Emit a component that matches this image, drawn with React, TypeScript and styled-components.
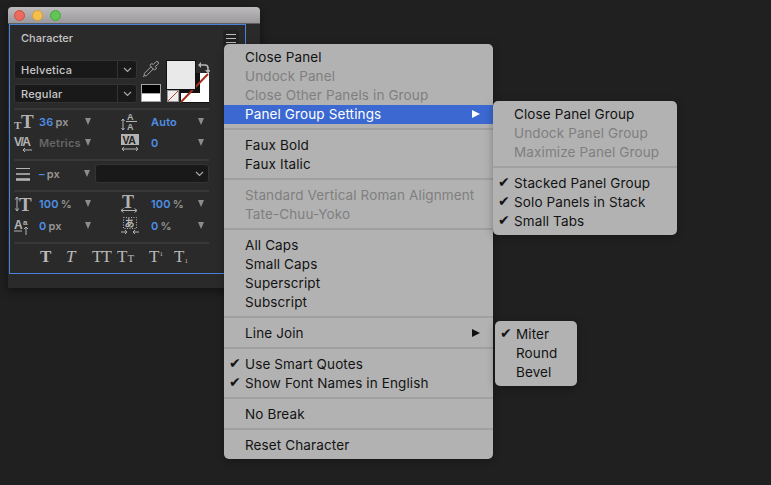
import React from "react";
import styled, { createGlobalStyle } from "styled-components";
import { Pipette } from "lucide-react";

const Global = createGlobalStyle`
  html, body {
    margin: 0;
    padding: 0;
    background: #202020;
  }
`;

const Page = styled.div`
  position: relative;
  width: 771px;
  height: 485px;
  overflow: hidden;
  background: #202020;
  font-family: "Inter", "Liberation Sans", sans-serif;
`;

const Window = styled.div`
  position: absolute;
  left: 8px;
  top: 7px;
  width: 252px;
  height: 281px;
  background: #2a2a2a;
  border-radius: 4px 4px 0 0;
  box-shadow: 0 3px 10px rgba(0, 0, 0, 0.45);
`;

const TitleBar = styled.div`
  display: flex;
  align-items: center;
  gap: 7px;
  height: 16px;
  padding-left: 6px;
  background: linear-gradient(#bdbbbd, #9b999b);
  border-radius: 4px 4px 0 0;
  border-bottom: 1px solid #5f5f5f;
`;

const Light = styled.span<{ color: string; edge: string }>`
  width: 11px;
  height: 11px;
  box-sizing: border-box;
  border-radius: 50%;
  background: ${(p) => p.color};
  border: 0.5px solid ${(p) => p.edge};
`;

const FocusFrame = styled.div`
  width: 237px;
  height: 250px;
  margin-left: 1px;
  box-sizing: border-box;
  border: 1px solid #4a83da;
`;

const Header = styled.div`
  display: flex;
  align-items: center;
  justify-content: space-between;
  height: 26px;
  padding: 0 6px 0 11px;
`;

const Title = styled.div`
  color: #c6c6c6;
  font-size: 11px;
  font-weight: 500;
`;

const Burger = styled.div`
  display: flex;
  flex-direction: column;
  justify-content: center;
  align-self: flex-start;
  gap: 3px;
  width: 16px;
  height: 17px;
  margin-top: 5px;
  box-sizing: border-box;
  padding: 0 3px;
  background: #222;
  border-radius: 2px;
  span {
    display: block;
    height: 1px;
    background: #bdbdbd;
  }
`;

const Body = styled.div`
  padding: 9px 36px 0 4px;
`;

const TopRow = styled.div`
  display: flex;
  gap: 4px;
  height: 48px;
`;

const Selects = styled.div`
  display: flex;
  flex: none;
  flex-direction: column;
  gap: 5px;
  width: 123px;
`;

const Select = styled.div<{ grow?: boolean }>`
  display: flex;
  align-items: center;
  height: 19px;
  box-sizing: border-box;
  ${(p) => (p.grow ? "flex: 1;" : "")}
  background: #191919;
  border: 1px solid #333;
  border-radius: 3px;
  color: #c8c8c8;
  font-size: 11px;
  font-weight: 500;
  letter-spacing: 0.2px;
`;

const SelectText = styled.div`
  flex: 1;
  padding-left: 6px;
`;

const SelectArrow = styled.div<{ plain?: boolean }>`
  display: flex;
  align-items: center;
  justify-content: center;
  width: 18px;
  height: 100%;
  border-left: 1px solid ${(p) => (p.plain ? "transparent" : "#333")};
`;

const Tools = styled.div`
  display: flex;
  flex: none;
  flex-direction: column;
  align-items: center;
  gap: 6px;
  width: 20px;
  color: #a9a9a9;
`;

const DefaultSwatch = styled.div`
  width: 20px;
  height: 18px;
  box-sizing: border-box;
  border: 1px solid #a5a5a5;
  background: linear-gradient(#000 50%, #a5a5a5 50%, #a5a5a5 56%, #fff 56%);
`;

const ColorStack = styled.div`
  position: relative;
  flex: none;
  width: 44px;
  height: 44px;
`;

const FillBox = styled.div`
  position: absolute;
  left: 1px;
  top: 0;
  width: 30px;
  height: 30px;
  box-sizing: border-box;
  background: #e9e9e9;
  border: 1px solid #111;
  z-index: 2;
`;

const StrokeBox = styled.svg`
  position: absolute;
  left: 15px;
  top: 13px;
`;

const NoneBox = styled.svg`
  position: absolute;
  left: 2px;
  top: 30px;
`;

const SwapIcon = styled.svg`
  position: absolute;
  left: 32px;
  top: 2px;
`;

const Rule = styled.div`
  height: 2px;
  background: #383838;
`;

const FieldGrid = styled.div<{ gap: number }>`
  display: grid;
  grid-template-columns: 82px 1fr;
  column-gap: 22px;
  row-gap: ${(p) => p.gap}px;
  padding: 3px 0 8px;
`;

const Field = styled.div<{ right?: boolean }>`
  display: flex;
  align-items: center;
  height: 17px;
  padding-left: ${(p) => (p.right ? 2 : 0)}px;
  font-size: 11px;
  font-weight: 600;
  letter-spacing: 0.2px;
`;

const FieldIcon = styled.svg`
  flex: none;
  width: 20px;
  height: 18px;
  overflow: visible;
  color: #b3b3b3;
`;

const Value = styled.div<{ inset: number; dim?: boolean }>`
  flex: 1;
  padding-left: ${(p) => p.inset}px;
  color: ${(p) => (p.dim ? "#666" : "#4f8fe6")};
`;

const Unit = styled.span`
  margin-left: 2px;
  color: #969696;
`;

const Caret = styled.span`
  flex: none;
  width: 0;
  height: 0;
  margin-right: 5px;
  border-left: 3.5px solid transparent;
  border-right: 3.5px solid transparent;
  border-top: 7px solid #8d8d8d;
`;

const StrokeRow = styled.div`
  display: flex;
  align-items: center;
  height: 29px;
  padding-bottom: 4px;
  box-sizing: border-box;
`;

const StrokeField = styled(Field)`
  flex: none;
  width: 81px;
`;

const StyleRow = styled.div`
  display: grid;
  grid-template-columns: 26px 26px 25px 32px 25px auto;
  align-items: baseline;
  height: 30px;
  padding: 3px 0 0 26px;
  box-sizing: border-box;
  color: #b9b9b9;
  font-family: "Liberation Serif", serif;
  font-size: 17px;
`;

const StyleBtn = styled.span<{ bold?: boolean; italic?: boolean; tight?: number }>`
  font-weight: ${(p) => (p.bold ? 700 : 400)};
  font-style: ${(p) => (p.italic ? "italic" : "normal")};
  letter-spacing: ${(p) => p.tight ?? 0}px;
  white-space: nowrap;
`;

const Mini = styled.span<{ up?: boolean; small?: boolean }>`
  font-size: ${(p) => (p.small ? 7 : 11)}px;
  vertical-align: ${(p) => (p.up ? "6px" : p.small ? "-1px" : "0")};
`;

const Menu = styled.div<{ x: number; y: number; w: number }>`
  position: absolute;
  left: ${(p) => p.x}px;
  top: ${(p) => p.y}px;
  width: ${(p) => p.w}px;
  box-sizing: border-box;
  padding: 4px 0;
  background: #b2b2b2;
  border-radius: 5px;
  box-shadow: 0 2px 8px rgba(0, 0, 0, 0.3);
  z-index: 5;
`;

const Row = styled.div<{ active?: boolean; off?: boolean }>`
  position: relative;
  display: flex;
  align-items: center;
  height: 19px;
  box-sizing: border-box;
  padding: 0 0 2px 21px;
  font-size: 13.5px;
  letter-spacing: 0.12px;
  white-space: nowrap;
  color: ${(p) => (p.active ? "#fff" : p.off ? "#7f7f7f" : "#121212")};
  background: ${(p) => (p.active ? "#3b69d1" : "transparent")};
`;

const Check = styled.span`
  position: absolute;
  left: 5px;
  top: 0;
  font-family: "DejaVu Sans", sans-serif;
  font-size: 14px;
  line-height: 17px;
`;

const Arrow = styled.span<{ active?: boolean }>`
  position: absolute;
  right: 13px;
  top: 5px;
  width: 0;
  height: 0;
  border-top: 4.5px solid transparent;
  border-bottom: 4.5px solid transparent;
  border-left: 8px solid ${(p) => (p.active ? "#fff" : "#111")};
`;

const Divider = styled.div`
  height: 2px;
  margin: 4px 0 6px;
  background: #a0a0a0;
`;

type Item =
  | "-"
  | { label: string; off?: boolean; check?: boolean; sub?: boolean; active?: boolean };

const mainItems: Item[] = [
  { label: "Close Panel" },
  { label: "Undock Panel", off: true },
  { label: "Close Other Panels in Group", off: true },
  { label: "Panel Group Settings", sub: true, active: true },
  "-",
  { label: "Faux Bold" },
  { label: "Faux Italic" },
  "-",
  { label: "Standard Vertical Roman Alignment", off: true },
  { label: "Tate-Chuu-Yoko", off: true },
  "-",
  { label: "All Caps" },
  { label: "Small Caps" },
  { label: "Superscript" },
  { label: "Subscript" },
  "-",
  { label: "Line Join", sub: true },
  "-",
  { label: "Use Smart Quotes", check: true },
  { label: "Show Font Names in English", check: true },
  "-",
  { label: "No Break" },
  "-",
  { label: "Reset Character" },
];

const groupItems: Item[] = [
  { label: "Close Panel Group" },
  { label: "Undock Panel Group", off: true },
  { label: "Maximize Panel Group", off: true },
  "-",
  { label: "Stacked Panel Group", check: true },
  { label: "Solo Panels in Stack", check: true },
  { label: "Small Tabs", check: true },
];

const joinItems: Item[] = [
  { label: "Miter", check: true },
  { label: "Round" },
  { label: "Bevel" },
];

const MenuList = ({ items }: { items: Item[] }) => (
  <>
    {items.map((item, i) =>
      item === "-" ? (
        <Divider key={i} />
      ) : (
        <Row key={i} active={item.active} off={item.off}>
          {item.check && <Check>✔</Check>}
          {item.label}
          {item.sub && <Arrow active={item.active} />}
        </Row>
      ),
    )}
  </>
);

const Chevron = () => (
  <svg width="9" height="6" viewBox="0 0 9 6" fill="none">
    <path d="M1 1l3.5 3.5L8 1" stroke="#a8a8a8" strokeWidth="1.2" />
  </svg>
);

const serif = { fontFamily: "Liberation Serif, serif", fill: "currentColor" };
const sans = { fontFamily: "Liberation Sans, sans-serif", fill: "currentColor" };

const SizeIcon = () => (
  <FieldIcon viewBox="0 0 20 18">
    <text x="0" y="16" fontSize="11" fontWeight="700" {...serif}>T</text>
    <text x="7" y="15" fontSize="19" fontWeight="700" {...serif}>T</text>
  </FieldIcon>
);

const LeadingIcon = () => (
  <FieldIcon viewBox="0 0 20 18">
    <path d="M3 6v11M1.5 8L3 6l1.5 2M1.5 15L3 17l1.5-2" stroke="currentColor" fill="none" />
    <text x="7" y="7" fontSize="9" {...sans}>A</text>
    <path d="M6 8.5h11" stroke="currentColor" />
    <text x="7" y="17" fontSize="9" {...sans}>A</text>
  </FieldIcon>
);

const KerningIcon = () => (
  <FieldIcon viewBox="0 0 20 18">
    <text x="0" y="12" fontSize="12" letterSpacing="-1.5" {...sans}>V/A</text>
    <path d="M9 16h9M11 14l-2 2 2 2" stroke="currentColor" fill="none" />
  </FieldIcon>
);

const TrackingIcon = () => (
  <FieldIcon viewBox="0 0 20 18">
    <rect x="1" y="0" width="18" height="11" fill="#b3b3b3" />
    <text x="2.5" y="10" fontSize="10.5" fontWeight="700" letterSpacing="-0.5" fill="#222" fontFamily="Liberation Sans, sans-serif">VA</text>
    <path d="M2 15h16M4 13l-2 2 2 2M16 13l2 2-2 2" stroke="currentColor" fill="none" />
  </FieldIcon>
);

const WeightIcon = () => (
  <FieldIcon viewBox="0 0 20 18">
    <path d="M2 3.5h14" stroke="currentColor" />
    <path d="M2 9h14" stroke="currentColor" strokeWidth="1.6" />
    <path d="M2 14.5h14" stroke="currentColor" strokeWidth="2.6" />
  </FieldIcon>
);

const VertScaleIcon = () => (
  <FieldIcon viewBox="0 0 20 18">
    <path d="M3 2v14M1.3 4.5L3 2l1.7 2.5M1.3 13.5L3 16l1.7-2.5" stroke="currentColor" fill="none" />
    <text x="5" y="16" fontSize="19" fontWeight="700" {...serif}>T</text>
  </FieldIcon>
);

const HorzScaleIcon = () => (
  <FieldIcon viewBox="0 0 20 18">
    <text x="2" y="13" fontSize="18" fontWeight="700" {...serif}>T</text>
    <path d="M1 15.5h16M3.5 13.5L1 15.5l2.5 2M14.5 13.5l2.5 2-2.5 2" stroke="currentColor" fill="none" />
  </FieldIcon>
);

const BaselineIcon = () => (
  <FieldIcon viewBox="0 0 20 18">
    <text x="0" y="12" fontSize="12" {...sans}>A</text>
    <text x="9" y="8" fontSize="8" {...sans}>a</text>
    <path d="M0 14h8" stroke="currentColor" />
    <path d="M12 18v-8M10 12l2-2 2 2" stroke="currentColor" fill="none" />
  </FieldIcon>
);

const TsumeIcon = () => (
  <FieldIcon viewBox="0 0 20 18">
    <rect x="3.5" y="0.5" width="13" height="11" fill="none" stroke="currentColor" strokeDasharray="1 1.5" />
    <text x="4.5" y="10" fontSize="10" fontFamily="Noto Sans CJK JP, sans-serif" fill="currentColor">あ</text>
    <path d="M1 15h6M5 13l2 2-2 2M19 15h-6M15 13l-2 2 2 2" stroke="currentColor" fill="none" />
  </FieldIcon>
);

export default function App() {
  return (
    <Page>
      <Global />
      <Window>
        <TitleBar>
          <Light color="#ec6a5e" edge="#c9503f" />
          <Light color="#f4bf4f" edge="#d39f32" />
          <Light color="#62c454" edge="#46a73a" />
        </TitleBar>
        <FocusFrame>
          <Header>
            <Title>Character</Title>
            <Burger>
              <span />
              <span />
              <span />
            </Burger>
          </Header>
          <Body>
            <TopRow>
              <Selects>
                <Select>
                  <SelectText>Helvetica</SelectText>
                  <SelectArrow>
                    <Chevron />
                  </SelectArrow>
                </Select>
                <Select>
                  <SelectText>Regular</SelectText>
                  <SelectArrow>
                    <Chevron />
                  </SelectArrow>
                </Select>
              </Selects>
              <Tools>
                <Pipette size={18} strokeWidth={1.3} />
                <DefaultSwatch />
              </Tools>
              <ColorStack>
                <FillBox />
                <StrokeBox width="29" height="30" viewBox="0 0 29 30">
                  <rect width="29" height="30" fill="#fff" />
                  <rect x="0" y="0" width="20" height="20" fill="#111" />
                  <path d="M0.5 0v29.5H29" stroke="#111" fill="none" />
                  <path d="M1 29L28 1" stroke="#a3301c" strokeWidth="2" />
                </StrokeBox>
                <NoneBox width="12" height="12" viewBox="0 0 12 12">
                  <rect x="0.5" y="0.5" width="11" height="11" fill="#eee" stroke="#999" />
                  <path d="M1 11L11 1" stroke="#b8432f" />
                </NoneBox>
                <SwapIcon width="13" height="12" viewBox="0 0 13 12" fill="none">
                  <path d="M2 3h6a3 3 0 0 1 3 3v3" stroke="#b5b5b5" strokeWidth="1.6" />
                  <path d="M4 0L1 3l3 3zM8 8l3 3.5L14 8z" fill="#b5b5b5" />
                </SwapIcon>
              </ColorStack>
            </TopRow>
            <Rule />
            <FieldGrid gap={4}>
              <Field>
                <SizeIcon />
                <Value inset={5}>36<Unit>px</Unit></Value>
                <Caret />
              </Field>
              <Field right>
                <LeadingIcon />
                <Value inset={11}>Auto</Value>
                <Caret />
              </Field>
              <Field>
                <KerningIcon />
                <Value inset={5} dim>Metrics</Value>
                <Caret />
              </Field>
              <Field right>
                <TrackingIcon />
                <Value inset={11}>0</Value>
                <Caret />
              </Field>
            </FieldGrid>
            <Rule />
            <StrokeRow>
              <StrokeField>
                <WeightIcon />
                <Value inset={5}>–<Unit>px</Unit></Value>
                <Caret />
              </StrokeField>
              <Select grow>
                <SelectText />
                <SelectArrow plain>
                  <Chevron />
                </SelectArrow>
              </Select>
            </StrokeRow>
            <Rule />
            <FieldGrid gap={5}>
              <Field>
                <VertScaleIcon />
                <Value inset={5}>100<Unit>%</Unit></Value>
                <Caret />
              </Field>
              <Field right>
                <HorzScaleIcon />
                <Value inset={11}>100<Unit>%</Unit></Value>
                <Caret />
              </Field>
              <Field>
                <BaselineIcon />
                <Value inset={5}>0<Unit>px</Unit></Value>
                <Caret />
              </Field>
              <Field right>
                <TsumeIcon />
                <Value inset={11}>0<Unit>%</Unit></Value>
                <Caret />
              </Field>
            </FieldGrid>
            <Rule />
            <StyleRow>
              <StyleBtn bold>T</StyleBtn>
              <StyleBtn italic>T</StyleBtn>
              <StyleBtn tight={-1}>TT</StyleBtn>
              <StyleBtn>T<Mini>T</Mini></StyleBtn>
              <StyleBtn>T<Mini up small>1</Mini></StyleBtn>
              <StyleBtn>T<Mini small>1</Mini></StyleBtn>
            </StyleRow>
          </Body>
        </FocusFrame>
      </Window>
      <Menu x={224} y={44} w={269}>
        <MenuList items={mainItems} />
      </Menu>
      <Menu x={493} y={101} w={184}>
        <MenuList items={groupItems} />
      </Menu>
      <Menu x={495} y={321} w={82}>
        <MenuList items={joinItems} />
      </Menu>
    </Page>
  );
}
